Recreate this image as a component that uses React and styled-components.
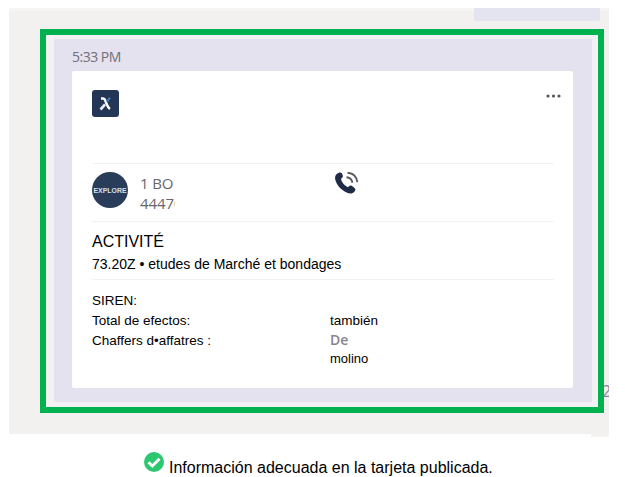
import React from 'react';
import styled, { createGlobalStyle } from 'styled-components';

const GlobalStyle = createGlobalStyle`
  * { box-sizing: border-box; }
  body { margin: 0; background: #fff; font-family: "Liberation Sans", Arial, sans-serif; color: #000; }
`;

const Page = styled.main`
  width: 625px;
  height: 477px;
  padding: 8px 0 0 9px;
  overflow: hidden;
`;

const Chat = styled.section`
  position: relative;
  width: 600px;
  height: 426px;
  padding: 21px 0 0 31px;
  background: #f2f1f0;
  border-top: 3px solid #f5f5f4;
  padding-top: 18px;
`;

const PreviousMessage = styled.div`
  position: absolute;
  top: -3px;
  left: 465px;
  width: 126px;
  height: 13px;
  background: #e4e3f0;
  border-radius: 0 0 2px 2px;
`;

const ChatEdge = styled.div`
  position: absolute;
  right: 0;
  bottom: -3px;
  width: 18px;
  height: 3px;
  background: #f4f3f2;
`;

const CutLetter = styled.span`
  position: absolute;
  left: 593px;
  top: 371px;
  width: 7px;
  overflow: hidden;
  font: 16px/18px "Open Sans", sans-serif;
  color: #85839a;
`;

const Highlight = styled.div`
  position: relative;
  width: 564px;
  height: 384px;
  padding: 4px 6px 5px 8px;
  border: 6px solid #00b14f;
  background: #f2f1f3;
`;

const Bubble = styled.article`
  width: 538px;
  height: 363px;
  padding: 9px 19px 14px 18px;
  background: #e3e2ee;
  border-radius: 2px;
`;

const Time = styled.time`
  display: block;
  height: 23px;
  font: 14px/18px "Open Sans", sans-serif;
  letter-spacing: ${p => p.$track};
  color: #706f7b;
`;

const Card = styled.div`
  height: 317px;
  padding: 0 19px 0 20px;
  background: #fff;
  border-radius: 2px;
`;

const CardHeader = styled.header`
  display: flex;
  justify-content: space-between;
  height: 93px;
  padding-top: 19px;
  border-bottom: 1px solid #f3f2f2;
`;

const MenuButton = styled.button`
  width: 16px;
  height: 12px;
  margin: 0 -8px 0 0;
  padding: 0;
  border: 0;
  background: none;
`;

const Contact = styled.div`
  display: grid;
  grid-template-columns: 48px 194px 30px;
  height: 58px;
  padding-top: 8px;
  border-bottom: 1px solid #f3f2f2;
`;

const ContactText = styled.div`
  padding-top: 1px;
  font: 15px/20px "Open Sans", sans-serif;
  letter-spacing: ${p => p.$track};
  color: #67676b;
`;

const CutLine = styled.div`
  width: ${p => p.$width}px;
  overflow: hidden;
  white-space: nowrap;
`;

const Activity = styled.section`
  height: 58px;
  padding-top: 10px;
  border-bottom: 1px solid #f3f2f2;
`;

const Title = styled.h2`
  margin: 0;
  font-size: 16px;
  font-weight: 400;
  line-height: 20px;
  letter-spacing: ${p => p.$track};
`;

const Detail = styled.p`
  margin: 0;
  padding-top: 2px;
  font-size: 14px;
  line-height: 20px;
  letter-spacing: ${p => p.$track};
  white-space: nowrap;
`;

const Facts = styled.div`
  display: grid;
  grid-template-columns: 238px 1fr;
  grid-template-rows: 20px 20px 18px 22px;
  padding-top: 11px;
`;

const Fact = styled.span`
  font-size: ${p => p.$size || 13.5}px;
  line-height: 20px;
  letter-spacing: ${p => p.$track || 0};
  white-space: nowrap;
`;

const SoftFact = styled(Fact)`
  font-family: "Open Sans", sans-serif;
  font-size: 14px;
  line-height: 17px;
  font-weight: 600;
  color: #85858a;
`;

const Caption = styled.footer`
  display: flex;
  gap: 5px;
  padding: 18px 0 0 135px;
  font-size: 16px;
  line-height: 20px;
  letter-spacing: ${p => p.$track};
  white-space: nowrap;

  span { padding-top: 6px; }
`;

const AppIcon = () => (
  <svg width="27" height="27" viewBox="0 0 27 27">
    <rect width="27" height="27" rx="3" fill="#243655" />
    <path d="M9 8.5h2.2c1.2 0 1.7.9 2.2 2.2l1.3 3.4c.8 2 1.5 3.7 3.2 4.9" fill="none" stroke="#fff" strokeWidth="2.5" />
    <path d="M8.5 19.5l4.6-5.2" fill="none" stroke="#e6edf5" strokeWidth="2.7" />
    <path d="M14.7 11.8l3.3-4" fill="none" stroke="#3978b6" strokeWidth="2.2" />
  </svg>
);

const Avatar = () => (
  <svg width="36" height="36" viewBox="0 0 36 36">
    <circle cx="18" cy="18" r="18" fill="#293c5a" />
    <text x="1.5" y="20.7" textLength="33" lengthAdjust="spacingAndGlyphs" fontFamily="Liberation Sans, sans-serif" fontWeight="700" fontSize="7" fill="#d9e0e9">EXPLORE</text>
  </svg>
);

const Phone = () => (
  <svg width="26" height="25" viewBox="0 0 26 25">
    <path d="M2.7 2.1C4.3.4 6.4-.1 7.7 1l1 2.2c.5 1.3 0 2.4-1.7 3.8.7 3.3 3.4 6.5 7 8.2 1.5-1.8 3.2-2 4.4-1l2.4 2c1 1 .7 2.2-.4 3.5-1.7 1.9-4.4 2.4-7.3 1C6.400 17.600 2 12.300 1.100 6.700.9 4.800 1.500 3.300 2.700 2.100z" fill="#202c46" />
    <path d="M12.500 5.200c3.100.2 5.300 2.200 6 5.600M13.500.8c5.400.2 9 3.800 9.800 9.400" fill="none" stroke="#575b61" strokeWidth="1.900" />
  </svg>
);

export default function App() {
  return (
    <>
      <GlobalStyle />
      <Page>
        <Chat>
          <PreviousMessage />
          <ChatEdge />
          <CutLetter>2</CutLetter>
          <Highlight>
            <Bubble>
              <Time $track="-0.5px">5:33 PM</Time>
              <Card>
                <CardHeader>
                  <AppIcon />
                  <MenuButton aria-label="Más opciones">
                    <svg width="16" height="12" viewBox="0 0 16 12" fill="#555559">
                      <circle cx="2" cy="6" r="1.6" /><circle cx="7.500" cy="6" r="1.600" /><circle cx="13" cy="6" r="1.600" />
                    </svg>
                  </MenuButton>
                </CardHeader>
                <Contact>
                  <Avatar />
                  <ContactText $track="-0.1px">
                    <CutLine $width={35}>1 BO</CutLine>
                    <CutLine $width={35}>44470</CutLine>
                  </ContactText>
                  <Phone />
                </Contact>
                <Activity>
                  <Title $track="0px">ACTIVITÉ</Title>
                  <Detail $track="0px">73.20Z • etudes de Marché et bondages</Detail>
                </Activity>
                <Facts>
                  <Fact>SIREN:</Fact><span />
                  <Fact>Total de efectos:</Fact><Fact>también</Fact>
                  <Fact>Chaffers d•affatres :</Fact><SoftFact>De</SoftFact>
                  <span /><Fact $size={13}>molino</Fact>
                </Facts>
              </Card>
            </Bubble>
          </Highlight>
        </Chat>
        <Caption $track="0px">
          <svg width="20" height="20" viewBox="0 0 20 20">
            <circle cx="10" cy="10" r="10" fill="#2dc770" />
            <path d="M4.500 10.300l3.800 3.700 7.200-7.200" fill="none" stroke="#fff" strokeWidth="3" />
          </svg>
          <span>Información adecuada en la tarjeta publicada.</span>
        </Caption>
      </Page>
    </>
  );
}
